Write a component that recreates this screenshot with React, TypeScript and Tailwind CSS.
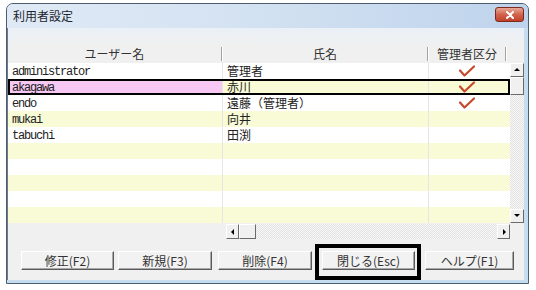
const rows = [
  { id: "administrator", name: "管理者", admin: true },
  { id: "akagawa", name: "赤川", admin: true, selected: true },
  { id: "endo", name: "遠藤（管理者）", admin: true },
  { id: "mukai", name: "向井" },
  { id: "tabuchi", name: "田渕" },
  { id: "", name: "" },
  { id: "", name: "" },
  { id: "", name: "" },
  { id: "", name: "" },
  { id: "", name: "" },
];

const track =
  "bg-[repeating-conic-gradient(#e2e2e2_0_25%,#f8f8f8_0_50%)] bg-[length:2px_2px]";

function Check() {
  return (
    <svg width="16" height="12" viewBox="0 0 16 12">
      <path
        d="M1 5.5 L5.5 10.5 L15 1.5"
        fill="none"
        stroke="#c64a2a"
        strokeWidth="2.2"
        strokeLinecap="round"
        strokeLinejoin="round"
      />
    </svg>
  );
}

function Arrow({ dir }: { dir: "up" | "down" | "left" | "right" }) {
  const d = {
    up: "M1 5 L4 2 L7 5 Z",
    down: "M1 2 L4 5 L7 2 Z",
    left: "M5 1 L2 4 L5 7 Z",
    right: "M3 1 L6 4 L3 7 Z",
  }[dir];
  return (
    <svg width="8" height="8" viewBox="0 0 8 8">
      <path d={d} fill="#000" />
    </svg>
  );
}

function SbButton({ dir, className }: { dir: "up" | "down" | "left" | "right"; className: string }) {
  return (
    <div
      className={`flex items-center justify-center bg-[#f0f0f0] border-t border-l border-white border-r border-b border-r-[#6a6a6a] border-b-[#6a6a6a] ${className}`}
    >
      <Arrow dir={dir} />
    </div>
  );
}

function Btn({ label, className = "" }: { label: string; className?: string }) {
  return (
    <div
      className={`h-[19px] flex items-center justify-center bg-[#f2f2f2] border-t border-l border-white border-r border-b border-r-[#5a5a5a] border-b-[#5a5a5a] shadow-[inset_-1px_-1px_0_#a8a8a8] text-[12px] text-[#333] ${className}`}
    >
      {label}
    </div>
  );
}

function HeaderDivider() {
  return <div className="w-[2px] h-[14px] border-l border-[#a3a3a3] border-r border-r-white" />;
}

export default function App() {
  return (
    <div className="w-[536px] h-[290px] bg-white overflow-hidden font-['Noto_Sans_CJK_JP',sans-serif] pt-[3px] pl-[6px]">
      <div className="w-[523px] h-[281px] flex flex-col rounded-t-[7px] border border-[#4d5d70] bg-[#c6dcef] overflow-hidden">
        {/* title bar */}
        <div className="h-[24px] flex items-start justify-between pl-[6px] pr-[4px] bg-gradient-to-r from-[#e0eaf6] via-[#d2e1f1] to-[#bed3ec]">
          <span className="mt-[3px] text-[12px] leading-[18px] text-[#1d2630]">利用者設定</span>
          <div className="mt-[3px] w-[29px] h-[15px] rounded-[3px] border border-[#7d2a1c] bg-gradient-to-b from-[#e6a899] via-[#d2634c] to-[#c0412b] flex items-center justify-center">
            <svg width="10" height="8" viewBox="0 0 10 8">
              <path d="M2 1 L8 7 M8 1 L2 7" stroke="#fff" strokeWidth="2" strokeLinecap="round" />
            </svg>
          </div>
        </div>

        {/* body */}
        <div className="flex-1 flex pr-[4px]">
          <div className="flex-1 flex flex-col bg-[#f0f0f0] border-l border-[#6d7a88]">
            <div className="h-[17px] bg-gradient-to-b from-[#eaf0f7] to-[#f0f0f0]" />

            {/* grid header */}
            <div className="h-[18px] flex items-center text-[12px] text-[#333]">
              <div className="w-[213px] text-center">ユーザー名</div>
              <HeaderDivider />
              <div className="w-[204px] text-center">氏名</div>
              <HeaderDivider />
              <div className="w-[76px] text-center">管理者区分</div>
              <HeaderDivider />
            </div>

            {/* grid body */}
            <div className="flex">
              <div className="w-[502px] flex flex-col">
                {rows.map((r, i) => {
                  const yellow = i % 2 === 1;
                  const bg = yellow ? "bg-[#f8fbd5]" : "bg-white";
                  return (
                    <div
                      key={i}
                      className={`h-[16px] flex text-[12px] text-[#222] ${bg} ${
                        r.selected ? "outline-2 outline-black -outline-offset-2" : ""
                      }`}
                    >
                      <div
                        className={`w-[214px] pl-[4px] pt-[1px] flex items-center font-['Liberation_Mono',monospace] text-[12px] leading-none tracking-[-1.2px] ${
                          r.selected ? "bg-[#f7c8f3]" : ""
                        }`}
                      >
                        {r.id}
                      </div>
                      <div className="w-[206px] pl-[4px] flex items-center leading-none border-l border-[#e6e6e6]">
                        {r.name}
                      </div>
                      <div className="w-[77px] border-l border-[#e6e6e6] flex items-center justify-center">
                        {r.admin && <Check />}
                      </div>
                      <div className="flex-1" />
                    </div>
                  );
                })}
              </div>
              {/* vertical scrollbar */}
              <div className={`w-[14px] h-[160px] flex flex-col ${track}`}>
                <SbButton dir="up" className="h-[14px]" />
                <div className="h-[18px] bg-[#f0f0f0] border-t border-l border-white border-r border-b border-r-[#6a6a6a] border-b-[#6a6a6a]" />
                <div className="flex-1" />
                <SbButton dir="down" className="h-[14px]" />
              </div>
            </div>

            {/* horizontal scrollbar */}
            <div className="h-[17px] flex items-center">
              <div className="w-[218px]" />
              <div className={`w-[284px] h-[15px] flex ${track}`}>
                <SbButton dir="left" className="w-[13px]" />
                <div className="w-[17px] bg-[#f0f0f0] border-t border-l border-white border-r border-b border-r-[#6a6a6a] border-b-[#6a6a6a]" />
                <div className="flex-1" />
                <SbButton dir="right" className="w-[13px]" />
              </div>
            </div>

            {/* buttons */}
            <div className="mt-[11px] flex pl-[13px]">
              <Btn label="修正(F2)" className="w-[93px]" />
              <Btn label="新規(F3)" className="w-[94px] ml-[4px]" />
              <Btn label="削除(F4)" className="w-[94px] ml-[6px]" />
              <div className="relative ml-[10px]">
                <Btn label="閉じる(Esc)" className="w-[93px]" />
                <div className="absolute -left-[7px] -right-[6px] -top-[7px] -bottom-[10px] border-4 border-black" />
              </div>
              <Btn label="ヘルプ(F1)" className="w-[89px] ml-[10px]" />
            </div>
          </div>
        </div>
        <div className="h-[3px]" />
      </div>
    </div>
  );
}
